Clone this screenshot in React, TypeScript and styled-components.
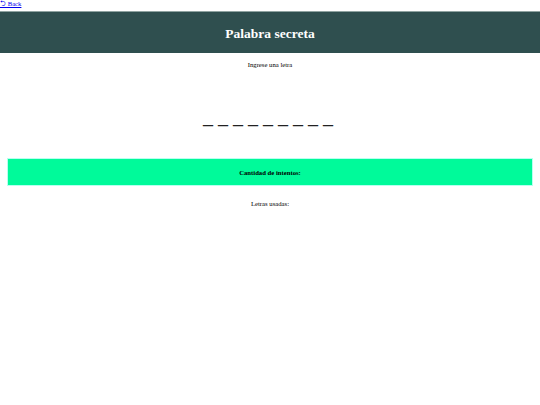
import styled, { createGlobalStyle } from 'styled-components';

const GlobalStyle = createGlobalStyle`
  body {
    margin: 0;
    background: #ffffff;
    font-family: "Liberation Serif", "Times New Roman", serif;
    font-size: 6.7px;
    color: #000000;
  }
`;

const word = 'secretaso';

const App = () => {
  return (
    <>
      <GlobalStyle />
      <StyledBack href='#'>⮌ Back</StyledBack>
      <StyledHeader>
        <StyledTitle>Palabra secreta</StyledTitle>
      </StyledHeader>
      <StyledPrompt>Ingrese una letra</StyledPrompt>
      <StyledWord>
        {word.split('').map((_, i) => (
          <StyledBlank key={i}>_</StyledBlank>
        ))}
      </StyledWord>
      <StyledTries>Cantidad de intentos:</StyledTries>
      <StyledUsed>Letras usadas:</StyledUsed>
    </>
  );
};

const StyledBack = styled.a`
  display: block;
  height: 11px;
  line-height: 8px;
  font-size: 6.7px;
  color: #0000ee;
  text-decoration: underline;
`;

const StyledHeader = styled.header`
  height: 41px;
  background: #2f4f4f;
  border-top: 1px solid #8fa3a1;
  display: flex;
  align-items: center;
  justify-content: center;
`;

const StyledTitle = styled.h1`
  margin: 2px 0 0;
  font-size: 13.5px;
  font-weight: bold;
  color: #ffffff;
`;

const StyledPrompt = styled.p`
  margin: 7px 0 0;
  text-align: center;
  line-height: 9px;
`;

const StyledWord = styled.div`
  margin-top: 35px;
  display: flex;
  justify-content: center;
  gap: 5px;
  padding-right: 4px;
  font-size: 20px;
  line-height: 24px;
  color: #222222;
`;

const StyledBlank = styled.span`
  display: inline-block;
  width: 10px;
`;

const StyledTries = styled.div`
  margin: 30px 7px 0;
  height: 26px;
  background: #00fa9a;
  border: 1px solid #b8fff0;
  display: flex;
  align-items: center;
  justify-content: center;
  font-weight: bold;
`;

const StyledUsed = styled.p`
  margin: 13px 0 0;
  text-align: center;
  line-height: 9px;
`;

export default App;
